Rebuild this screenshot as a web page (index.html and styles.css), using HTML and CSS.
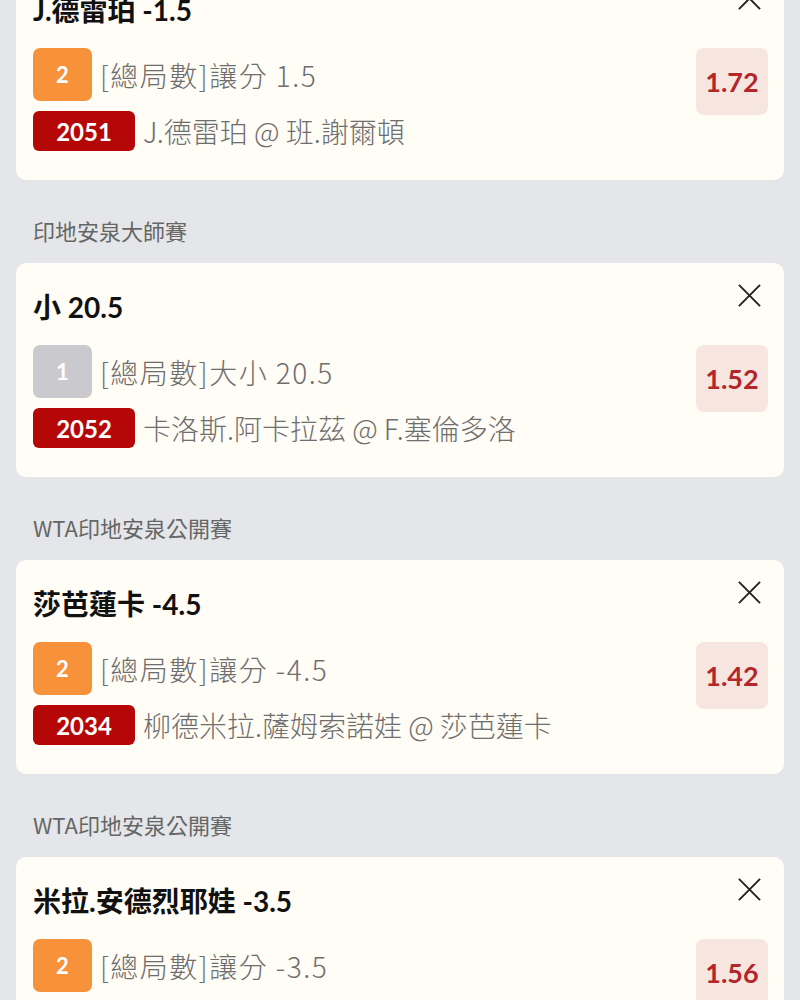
FILE: index.html
```html
<!DOCTYPE html>
<html lang="zh-Hant">
<head>
    <meta charset="UTF-8">
    <meta name="viewport" content="width=device-width, initial-scale=1.0">
    <title>投注單</title>
    <link rel="stylesheet" href="styles.css">
</head>
<body>
    <div class="slip">
        <div class="bet first">
            <div class="betHead">
                <div class="betTitle">J.德雷珀 -1.5</div>
                <div class="close"><svg viewBox="0 0 26 26"><path d="M2 2L24 24M24 2L2 24"/></svg></div>
            </div>
            <div class="betBody">
                <div class="betInfo">
                    <div class="line">
                        <span class="pick orange">2</span>
                        <span class="market">[總局數]讓分 1.5</span>
                    </div>
                    <div class="line">
                        <span class="code">2051</span>
                        <span class="match">J.德雷珀 @ 班.謝爾頓</span>
                    </div>
                </div>
                <div class="odds">1.72</div>
            </div>
        </div>

        <div class="league">印地安泉大師賽</div>
        <div class="bet">
            <div class="betHead">
                <div class="betTitle">小 20.5</div>
                <div class="close"><svg viewBox="0 0 26 26"><path d="M2 2L24 24M24 2L2 24"/></svg></div>
            </div>
            <div class="betBody">
                <div class="betInfo">
                    <div class="line">
                        <span class="pick grey">1</span>
                        <span class="market">[總局數]大小 20.5</span>
                    </div>
                    <div class="line">
                        <span class="code">2052</span>
                        <span class="match">卡洛斯.阿卡拉茲 @ F.塞倫多洛</span>
                    </div>
                </div>
                <div class="odds">1.52</div>
            </div>
        </div>

        <div class="league">WTA印地安泉公開賽</div>
        <div class="bet">
            <div class="betHead">
                <div class="betTitle">莎芭蓮卡 -4.5</div>
                <div class="close"><svg viewBox="0 0 26 26"><path d="M2 2L24 24M24 2L2 24"/></svg></div>
            </div>
            <div class="betBody">
                <div class="betInfo">
                    <div class="line">
                        <span class="pick orange">2</span>
                        <span class="market">[總局數]讓分 -4.5</span>
                    </div>
                    <div class="line">
                        <span class="code">2034</span>
                        <span class="match">柳德米拉.薩姆索諾娃 @ 莎芭蓮卡</span>
                    </div>
                </div>
                <div class="odds">1.42</div>
            </div>
        </div>

        <div class="league">WTA印地安泉公開賽</div>
        <div class="bet">
            <div class="betHead">
                <div class="betTitle">米拉.安德烈耶娃 -3.5</div>
                <div class="close"><svg viewBox="0 0 26 26"><path d="M2 2L24 24M24 2L2 24"/></svg></div>
            </div>
            <div class="betBody">
                <div class="betInfo">
                    <div class="line">
                        <span class="pick orange">2</span>
                        <span class="market">[總局數]讓分 -3.5</span>
                    </div>
                    <div class="line">
                        <span class="code">2036</span>
                        <span class="match">米拉.安德烈耶娃 @ 柯林斯</span>
                    </div>
                </div>
                <div class="odds">1.56</div>
            </div>
        </div>
    </div>
</body>
</html>
```

FILE: styles.css
```css
* {
    box-sizing: border-box;
    margin: 0;
    padding: 0;
}

body {
    background-color: #e5e6e9;
    font-family: Lato, "Noto Sans CJK TC", sans-serif;
    overflow: hidden;
}

.slip {
    padding: 0 16px;
}

.league {
    margin: 35px 0 18px;
    padding-left: 17px;
    font-family: "Noto Sans CJK TC", sans-serif;
    font-size: 22px;
    line-height: 30px;
    color: #666;
}

.bet {
    background: #fffdf6;
    border-radius: 10px;
    padding: 28px 16px 29px 17px;
}

.bet.first {
    margin-top: -34px;
}

.betHead {
    display: flex;
    justify-content: space-between;
    align-items: flex-start;
}

.betTitle {
    font-size: 28px;
    font-weight: 700;
    line-height: 32px;
    color: #111;
}

.close {
    width: 25px;
    height: 25px;
    margin: -8px 6px 0 0;
    cursor: pointer;
}

.close svg {
    display: block;
    width: 100%;
    height: 100%;
    fill: none;
    stroke: #222;
    stroke-width: 2;
}

.betBody {
    display: flex;
    justify-content: space-between;
    align-items: flex-start;
    margin-top: 22px;
}

.betInfo {
    display: flex;
    flex-direction: column;
    gap: 10px;
}

.line {
    display: flex;
    align-items: center;
    gap: 8px;
}

.pick {
    width: 59px;
    height: 53px;
    border-radius: 7px;
    display: flex;
    justify-content: center;
    align-items: center;
    color: #fff;
    font-size: 22px;
    font-weight: 700;
}

.pick.orange {
    background: #f7913a;
}

.pick.grey {
    background: #c9c9ce;
}

.code {
    width: 102px;
    height: 40px;
    border-radius: 6px;
    background: #b50707;
    display: flex;
    justify-content: center;
    align-items: center;
    color: #fff;
    font-size: 24px;
    font-weight: 700;
}

.market,
.match {
    font-family: "Noto Sans CJK TC", sans-serif;
    font-size: 28px;
    font-weight: 300;
    color: #6e6e6e;
    white-space: nowrap;
}

.market {
    letter-spacing: 1.5px;
}

.odds {
    width: 72px;
    height: 67px;
    border-radius: 8px;
    background: #f7e6e0;
    display: flex;
    justify-content: center;
    align-items: center;
    color: #b3262a;
    font-size: 27px;
    font-weight: 700;
}
```
